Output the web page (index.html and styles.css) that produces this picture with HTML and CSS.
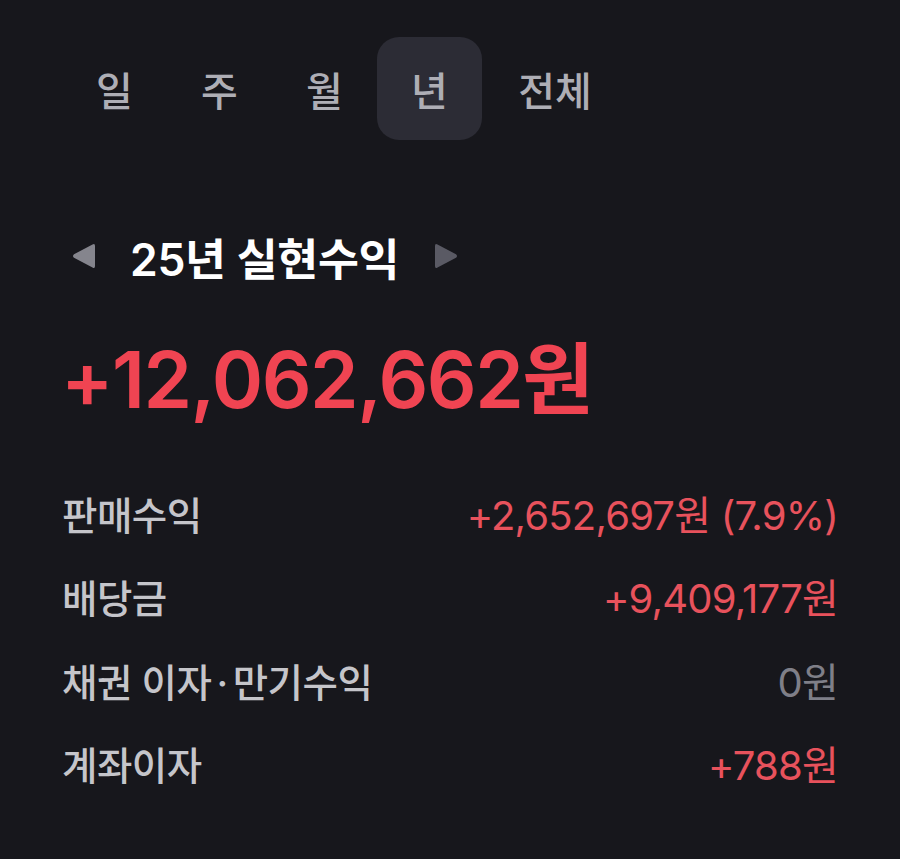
FILE: index.html
```html
<!DOCTYPE html>
<html lang="ko">
<head>
<meta charset="utf-8">
<link rel="stylesheet" href="styles.css">
</head>
<body>
<div class="page">
  <nav class="tabs">
    <div class="tab">일</div>
    <div class="tab">주</div>
    <div class="tab">월</div>
    <div class="tab active">년</div>
    <div class="tab wide">전체</div>
  </nav>
  <div class="title-row">
    <svg class="arrow prev" width="26" height="28" viewBox="0 0 26 28"><path d="M24 4 Q24 1 21.5 2.5 L3 12.2 Q1 14 3 15.8 L21.5 25.5 Q24 27 24 24 Z" fill="currentColor"/></svg>
    <h1 class="title">25년 실현수익</h1>
    <svg class="arrow next" width="26" height="28" viewBox="0 0 26 28"><path d="M2 4 Q2 1 4.5 2.5 L23 12.2 Q25 14 23 15.8 L4.5 25.5 Q2 27 2 24 Z" fill="currentColor"/></svg>
  </div>
  <div class="total">+12,062,662원</div>
  <div class="rows">
    <div class="row"><span class="label">판매수익</span><span class="value red">+2,652,697원 (7.9%)</span></div>
    <div class="row"><span class="label">배당금</span><span class="value red">+9,409,177원</span></div>
    <div class="row"><span class="label">채권 이자<span class="dot">·</span>만기수익</span><span class="value gray">0원</span></div>
    <div class="row"><span class="label">계좌이자</span><span class="value red">+788원</span></div>
  </div>
</div>
</body>
</html>
```
FILE: styles.css
```css
html, body {
  margin: 0;
  padding: 0;
  background: #17171c;
}
body {
  width: 900px;
  height: 859px;
  overflow: hidden;
  font-family: Inter, "Noto Sans CJK KR", sans-serif;
}
.page {
  padding: 37px 62px 0 62px;
}
.tabs {
  display: flex;
  height: 103px;
}
.tab {
  width: 105px;
  display: flex;
  align-items: center;
  justify-content: center;
  font-size: 40px;
  font-weight: 500;
  color: #aeaeb5;
  border-radius: 22px;
}
.tab.wide {
  width: 146px;
}
.tab.active {
  background: #2c2c35;
}
.title-row {
  display: flex;
  align-items: center;
  height: 60px;
  margin-top: 86px;
  margin-left: 9px;
}
.arrow.prev {
  color: #85858d;
}
.arrow.next {
  color: #5a5a64;
}
.title {
  margin: 0 34px 0 33px;
  font-size: 44.5px;
  font-weight: 600;
  color: #ffffff;
  letter-spacing: -0.3px;
}
.total {
  margin-top: 64px;
  margin-left: -1px;
  font-size: 78px;
  font-weight: 600;
  color: #f04452;
  letter-spacing: -1.5px;
  line-height: 60px;
}
.rows {
  margin-top: 61px;
  display: flex;
  flex-direction: column;
}
.row {
  display: flex;
  justify-content: space-between;
  align-items: center;
  height: 83.5px;
}
.label {
  font-size: 38.5px;
  font-weight: 500;
  color: #c5c5ca;
  letter-spacing: -0.5px;
}
.dot {
  margin: 0 5px;
}
.value {
  font-size: 40px;
  letter-spacing: -0.8px;
}
.value.red {
  color: #e8525c;
}
.value.gray {
  color: #7f7f88;
}
```
